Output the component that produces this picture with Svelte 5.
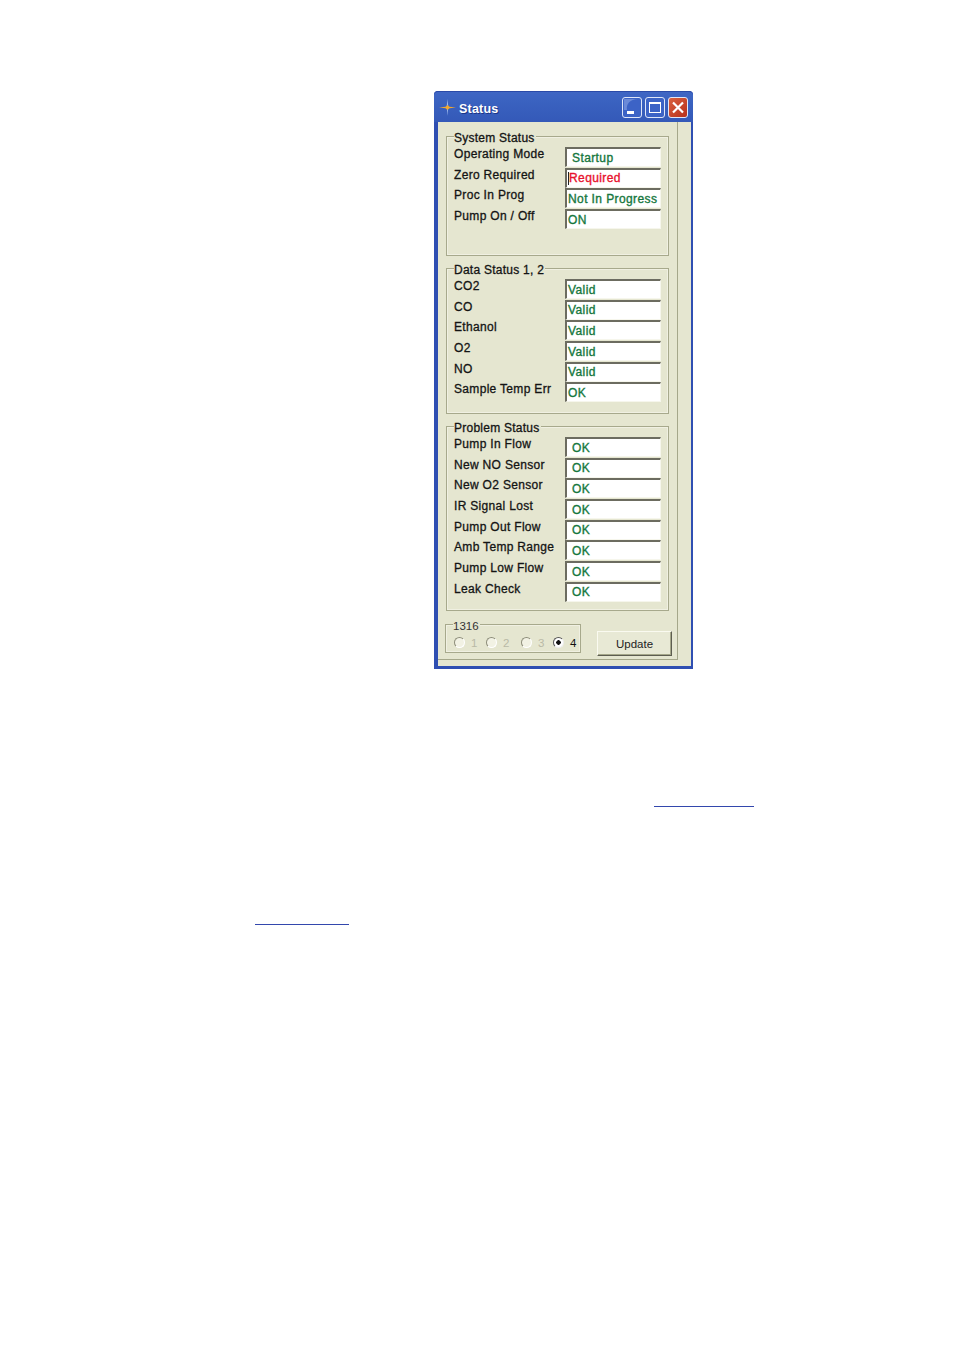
<script lang="ts">
  type Row = { label: string; value: string; tone?: string; inset?: boolean; caret?: boolean };

  const systemRows: Row[] = [
    { label: 'Operating Mode', value: 'Startup', inset: true },
    { label: 'Zero Required', value: 'Required', tone: 'bad', caret: true },
    { label: 'Proc In Prog', value: 'Not In Progress' },
    { label: 'Pump On / Off', value: 'ON' }
  ];

  const dataRows: Row[] = [
    { label: 'CO2', value: 'Valid' },
    { label: 'CO', value: 'Valid' },
    { label: 'Ethanol', value: 'Valid' },
    { label: 'O2', value: 'Valid' },
    { label: 'NO', value: 'Valid' },
    { label: 'Sample Temp Err', value: 'OK' }
  ];

  const problemRows: Row[] = [
    'Pump In Flow',
    'New NO Sensor',
    'New O2 Sensor',
    'IR Signal Lost',
    'Pump Out Flow',
    'Amb Temp Range',
    'Pump Low Flow',
    'Leak Check'
  ].map((label) => ({ label, value: 'OK', inset: true }));

  const groups = [
    { title: 'System Status', rows: systemRows, cls: 'system' },
    { title: 'Data Status 1, 2', rows: dataRows, cls: 'data' },
    { title: 'Problem Status', rows: problemRows, cls: 'problem' }
  ];

  const channels = ['1', '2', '3', '4'];
</script>

<div class="page">
  <div class="window">
    <header class="titlebar">
      <svg class="app-icon" width="17" height="17" viewBox="0 0 17 17" aria-hidden="true">
        <path d="M8.5 0 L9.3 7.5 L8.5 17 L7.7 7.5 Z" fill="#9db8ea" />
        <path d="M0 8.5 L6.5 7.7 L8.5 6 L10.5 7.7 L17 8.5 L10.5 9.3 L8.5 11 L6.5 9.3 Z" fill="#f0a830" />
      </svg>
      <span class="title">Status</span>
      <div class="controls">
        <div class="ctl">
          <svg width="20" height="21" viewBox="0 0 20 21" aria-hidden="true">
            <path d="M16 2 C8 2 4 7 5 13 L2 13 L2 2 Z" fill="#7f9be0" opacity="0.7" />
            <rect x="5" y="14" width="7" height="3" fill="#fff" />
          </svg>
        </div>
        <div class="ctl">
          <svg width="20" height="21" viewBox="0 0 20 21" aria-hidden="true">
            <rect x="4.5" y="5.5" width="11" height="10" fill="none" stroke="#fff" />
            <rect x="4" y="5" width="12" height="2" fill="#fff" />
          </svg>
        </div>
        <div class="ctl close">
          <svg width="20" height="21" viewBox="0 0 20 21" aria-hidden="true">
            <path d="M5 5.5 L15 15.5 M15 5.5 L5 15.5" stroke="#fff" stroke-width="2.2" />
          </svg>
        </div>
      </div>
    </header>

    <div class="client">
      <div class="panel">
        {#each groups as group}
          <section class="group {group.cls}">
            <span class="legend">{group.title}</span>
            {#each group.rows as row}
              <div class="row">
                <span class="label">{row.label}</span>
                <span class="field" class:inset={row.inset} class:bad={row.tone === 'bad'}>
                  {#if row.caret}<i class="caret"></i>{/if}{row.value}
                </span>
              </div>
            {/each}
          </section>
        {/each}

        <div class="footer">
          <section class="channel">
            <span class="legend thin">1316</span>
            {#each channels as ch}
              <div class="radio" class:on={ch === '4'} class:wide={ch === '3'}>
                <i class="dot"></i>
                <span>{ch}</span>
              </div>
            {/each}
          </section>
          <button type="button" class="update">Update</button>
        </div>
      </div>
    </div>
  </div>

  <div class="rule first"></div>
  <div class="rule second"></div>
</div>

<style>
  :global(body) {
    margin: 0;
    background: #fff;
  }

  .page {
    height: 1350px;
    box-sizing: border-box;
    padding-top: 91px;
    overflow: hidden;
  }

  .window {
    width: 259px;
    height: 578px;
    margin-left: 434px;
    box-sizing: border-box;
    display: flex;
    flex-direction: column;
    background: #2f4fb2;
    border-radius: 4px 4px 0 0;
    font-family: "Liberation Sans", Arial, sans-serif;
  }

  .titlebar {
    height: 30px;
    flex: none;
    display: flex;
    align-items: center;
    padding: 0 5px 0 5px;
    background: linear-gradient(#3f66c4 0%, #3a62c0 30%, #3459b8 100%);
    border-top: 1px solid #2a4aa8;
    border-radius: 4px 4px 0 0;
  }

  .app-icon {
    flex: none;
    margin-top: 1px;
  }

  .title {
    margin-left: 3px;
    margin-top: 3px;
    color: #fff;
    font-size: 12.5px;
    font-weight: 700;
    letter-spacing: 0.2px;
    text-shadow: 1px 1px 0 #1c3488;
  }

  .controls {
    margin-left: auto;
    margin-top: 1px;
    display: flex;
    gap: 3px;
  }

  .ctl {
    width: 20px;
    height: 21px;
    box-sizing: border-box;
    border: 1px solid #dfe6f8;
    border-radius: 3px;
    background: #3c63c6;
    overflow: hidden;
  }

  .ctl svg {
    display: block;
    margin: -1px;
  }

  .close {
    background: linear-gradient(135deg, #d9603f, #b8301c);
  }

  .client {
    flex: 1;
    margin: 0 2px 3px 4px;
    background: #e5e6d0;
    min-height: 0;
  }

  .panel {
    width: 240px;
    height: 538px;
    box-sizing: border-box;
    padding: 14px 8px 0;
    border-right: 1px solid #a5a78a;
    border-bottom: 1px solid #a5a78a;
    display: flex;
    flex-direction: column;
  }

  .group {
    position: relative;
    width: 223px;
    flex: none;
    box-sizing: border-box;
    padding: 10px 7px 0 7px;
    border: 1px solid #a7a98c;
    box-shadow: inset 0 0 0 1px #f0f0e2;
    margin-bottom: 12px;
  }

  .system {
    height: 120px;
  }

  .data {
    height: 146px;
  }

  .problem {
    height: 185px;
    margin-bottom: 13px;
  }

  .legend {
    position: absolute;
    top: -6px;
    left: 7px;
    padding: 0 1px 0 0;
    background: #e5e6d0;
    color: #141414;
    font-size: 12px;
    line-height: 14px;
    font-weight: 500;
    letter-spacing: 0.25px;
    -webkit-text-stroke: 0.3px #141414;
  }

  .legend.thin {
    top: -6px;
    left: 7px;
    font-size: 11.5px;
    letter-spacing: 0;
    -webkit-text-stroke: 0;
    color: #333;
  }

  .row {
    height: 20.7px;
    display: flex;
    justify-content: space-between;
  }

  .label {
    color: #141414;
    font-size: 12px;
    line-height: 14px;
    letter-spacing: 0.32px;
    -webkit-text-stroke: 0.3px #141414;
    white-space: nowrap;
  }

  .field {
    width: 96px;
    height: 20px;
    box-sizing: border-box;
    padding-left: 1px;
    display: flex;
    align-items: center;
    background: #fff;
    border-top: 2px solid #6c6c60;
    border-left: 2px solid #6c6c60;
    border-right: 1px solid #f6f6ec;
    border-bottom: 1px solid #f6f6ec;
    color: #15773d;
    font-size: 12px;
    letter-spacing: 0.4px;
    -webkit-text-stroke: 0.35px #15773d;
    white-space: nowrap;
  }

  .field.inset {
    padding-left: 5px;
  }

  .field.bad {
    color: #e8112d;
    -webkit-text-stroke-color: #e8112d;
  }

  .caret {
    width: 1px;
    height: 13px;
    background: #222;
    flex: none;
  }

  .footer {
    display: flex;
    align-items: flex-start;
    margin-left: -1px;
  }

  .channel {
    position: relative;
    width: 136px;
    height: 29px;
    flex: none;
    box-sizing: border-box;
    padding: 8px 0 0 8px;
    display: flex;
    align-items: center;
    border: 1px solid #a7a98c;
    box-shadow: inset 0 0 0 1px #f0f0e2;
  }

  .radio {
    width: 32px;
    flex: none;
    display: flex;
    align-items: center;
    gap: 6px;
    color: #b9b9a6;
    font-size: 11.5px;
  }

  .radio.wide {
    margin-left: 3px;
  }

  .radio.on {
    width: auto;
    color: #111;
  }

  .dot {
    width: 11px;
    height: 11px;
    box-sizing: border-box;
    border-radius: 50%;
    background: #f2f2e4;
    border: 1.5px solid #8d8d7a;
    border-right-color: #fff;
    border-bottom-color: #fff;
    flex: none;
  }

  .on .dot {
    background: radial-gradient(circle, #111 0 2px, #fff 2.5px);
    border-color: #555 #eee #eee #555;
  }

  .update {
    width: 75px;
    height: 25px;
    flex: none;
    margin: 7px 0 0 16px;
    padding: 0;
    box-sizing: border-box;
    appearance: none;
    background: #e8e9d5;
    border: 1px solid;
    border-color: #fafaf0 #5d5d50 #5d5d50 #fafaf0;
    box-shadow: inset -1px -1px 0 #a5a78a;
    font: 11.5px "Liberation Sans", Arial, sans-serif;
    color: #222;
  }

  .rule {
    height: 1px;
    background: #3347ad;
  }

  .first {
    width: 100px;
    margin: 137px 0 0 654px;
  }

  .second {
    width: 94px;
    margin: 117px 0 0 255px;
  }
</style>
